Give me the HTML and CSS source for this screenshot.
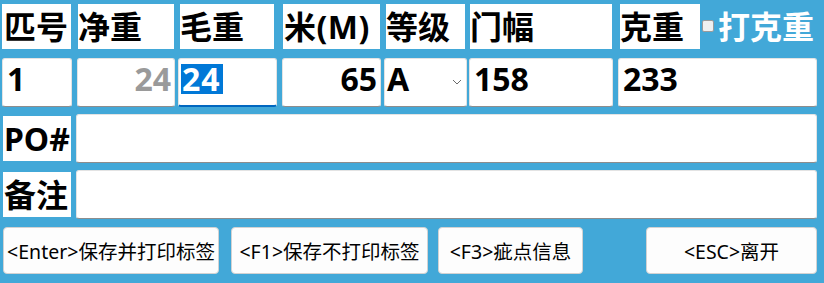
FILE: index.html
```html
<!DOCTYPE html>
<html lang="zh-CN">
<head>
<meta charset="utf-8">
<title>打克重</title>
<link rel="stylesheet" href="styles.css">
</head>
<body>
<div class="form">
  <div class="row head">
    <div class="label h1">匹号</div>
    <div class="label h2">净重</div>
    <div class="label h3">毛重</div>
    <div class="label h4">米(M)</div>
    <div class="label h5">等级</div>
    <div class="label h6">门幅</div>
    <div class="label h7">克重</div>
    <label class="check"><span class="box"></span><span class="check-text">打克重</span></label>
  </div>
  <div class="row values">
    <div class="field v1">1</div>
    <div class="field v2 right disabled">24</div>
    <div class="field v3 focused"><span class="sel">24</span></div>
    <div class="field v4 right">65</div>
    <div class="field v5 select">A<svg class="chev" width="10" height="6" viewBox="0 0 10 6"><path d="M1 1 L5 5 L9 1" fill="none" stroke="#6b6b6b" stroke-width="1"/></svg></div>
    <div class="field v6">158</div>
    <div class="field v7">233</div>
  </div>
  <div class="row wide">
    <div class="label side">PO#</div>
    <div class="field grow"></div>
  </div>
  <div class="row wide second">
    <div class="label side">备注</div>
    <div class="field grow"></div>
  </div>
  <div class="row actions">
    <button class="btn b1">&lt;Enter&gt;保存并打印标签</button>
    <button class="btn b2">&lt;F1&gt;保存不打印标签</button>
    <button class="btn b3">&lt;F3&gt;疵点信息</button>
    <button class="btn b4">&lt;ESC&gt;离开</button>
  </div>
</div>
</body>
</html>
```

FILE: styles.css
```css
html, body {
  margin: 0;
  padding: 0;
}
body {
  width: 824px;
  height: 283px;
  background: #42a8d8;
  font-family: "Noto Sans", "Noto Sans CJK SC", sans-serif;
  overflow: hidden;
}
.form {
  display: flex;
  flex-direction: column;
  padding-top: 4px;
}
.row {
  display: flex;
  align-items: stretch;
}
.label {
  background: #fff;
  color: #000;
  font-weight: 700;
  font-size: 32px;
  line-height: 1;
  display: flex;
  align-items: center;
  padding-left: 0;
  box-sizing: border-box;
  white-space: nowrap;
  overflow: hidden;
}
.head { height: 45px; }
.h1 { margin-left: 2px; width: 69px; padding-left: 2px; }
.h2 { margin-left: 7px; width: 96px; }
.h3 { margin-left: 6px; width: 94px; }
.h4 { margin-left: 9px; width: 97px; padding-left: 1px; letter-spacing: 0.5px; }
.h5 { margin-left: 6px; width: 79px; }
.h6 { margin-left: 5px; width: 142px; }
.h7 { margin-left: 8px; width: 80px; }
.check {
  margin-left: 2px;
  display: flex;
  align-items: center;
}
.box {
  width: 10px;
  height: 10px;
  background: #f0f0f0;
  border: 1px solid #9a9a9a;
  border-radius: 2px;
  margin-right: 4px;
  margin-top: -2px;
}
.check-text {
  color: #fff;
  font-weight: 700;
  font-size: 32px;
  line-height: 1;
}

.values { height: 49px; margin-top: 9px; }
.field {
  background: #fff;
  border: 1px solid #e3e3e3;
  border-bottom-color: #8d8d8d;
  border-radius: 3px;
  box-sizing: border-box;
  font-weight: 700;
  font-size: 32px;
  line-height: 1;
  color: #000;
  display: flex;
  align-items: center;
  padding: 0 3px 8px 4px;
  white-space: nowrap;
}
.right { justify-content: flex-end; }
.disabled { color: #9a9a9a; }
.focused {
  border-bottom: 2px solid #0067c0;
  padding-left: 2px;
  padding-bottom: 7px;
}
.sel {
  background: #0078d7;
  color: #fff;
  padding: 0 2px 0 1px;
  letter-spacing: 1px;
  height: 30px;
  display: flex;
  align-items: center;
}
.select { justify-content: space-between; padding-left: 2px; padding-right: 4px; }
.chev { margin-top: 6px; }
.v1 { margin-left: 2px; width: 70px; }
.v2 { margin-left: 5px; width: 98px; }
.v3 { margin-left: 3px; width: 99px; }
.v4 { margin-left: 5px; width: 99px; }
.v5 { margin-left: 3px; width: 83px; }
.v6 { margin-left: 2px; width: 144px; }
.v7 { margin-left: 5px; width: 199px; }

.wide { height: 49px; margin-top: 7px; align-items: center; }
.side { margin-left: 3px; width: 68px; height: 45px; padding-left: 1px; }
.grow { margin-left: 5px; width: 741px; height: 49px; }

.actions { margin-top: 8px; height: 47px; }
.btn {
  background: #fdfdfd;
  border: 1px solid #d2d2d2;
  border-radius: 4px;
  font-family: "Noto Sans", "Noto Sans CJK SC", sans-serif;
  font-size: 19.5px;
  color: #000;
  padding: 0;
  height: 47px;
  white-space: nowrap;
}
.b1 { margin-left: 3px; width: 216px; }
.b2 { margin-left: 12px; width: 197px; }
.b3 { margin-left: 10px; width: 145px; }
.b4 { margin-left: 63px; width: 171px; }
```
